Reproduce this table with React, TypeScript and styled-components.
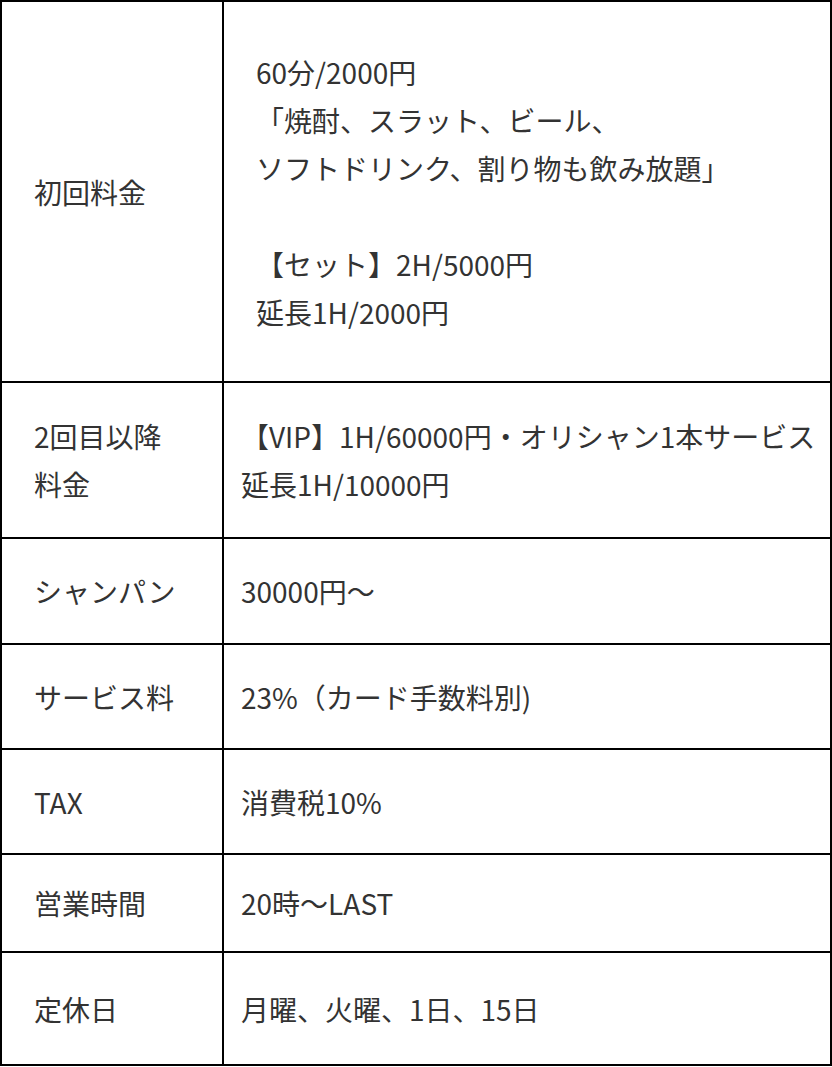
import styled, { createGlobalStyle } from 'styled-components';

const GlobalStyle = createGlobalStyle`
  html, body {
    margin: 0;
    padding: 0;
    background: #fff;
  }
`;

const Table = styled.div`
  width: 832px;
  box-sizing: border-box;
  border: 2px solid #000;
  font-family: 'Noto Sans CJK JP', 'Noto Sans', sans-serif;
  font-size: 28px;
  line-height: 48px;
  color: #333;
`;

const Row = styled.div<{ $height: number; $first?: boolean }>`
  display: grid;
  grid-template-columns: 222px 1fr;
  box-sizing: border-box;
  height: ${(p) => p.$height}px;
  border-top: ${(p) => (p.$first ? 'none' : '2px solid #000')};
`;

const HeadCell = styled.div`
  display: flex;
  align-items: center;
  box-sizing: border-box;
  padding-left: 32px;
  border-right: 2px solid #000;
`;

const Cell = styled.div<{ $indent?: number }>`
  display: flex;
  align-items: center;
  padding-left: ${(p) => p.$indent ?? 17}px;
  white-space: nowrap;
`;

const Lines = styled.div`
  display: flex;
  flex-direction: column;
`;

const Blank = styled.div`
  height: 48px;
`;

const rows = [
  { head: '2回目以降\n料金', body: ['【VIP】1H/60000円・オリシャン1本サービス', '延長1H/10000円'], height: 156 },
  { head: 'シャンパン', body: ['30000円〜'], height: 106 },
  { head: 'サービス料', body: ['23%（カード手数料別)'], height: 105 },
  { head: 'TAX', body: ['消費税10%'], height: 105 },
  { head: '営業時間', body: ['20時〜LAST'], height: 98 },
  { head: '定休日', body: ['月曜、火曜、1日、15日'], height: 113 },
];

export default function App() {
  return (
    <>
      <GlobalStyle />
      <Table>
        <Row $height={379} $first>
          <HeadCell>初回料金</HeadCell>
          <Cell $indent={32}>
            <Lines>
              <div>60分/2000円</div>
              <div>「焼酎、スラット、ビール、</div>
              <div>ソフトドリンク、割り物も飲み放題」</div>
              <Blank />
              <div>【セット】2H/5000円</div>
              <div>延長1H/2000円</div>
            </Lines>
          </Cell>
        </Row>
        {rows.map((r) => (
          <Row key={r.head} $height={r.height}>
            <HeadCell>
              <Lines>
                {r.head.split('\n').map((l) => (
                  <div key={l}>{l}</div>
                ))}
              </Lines>
            </HeadCell>
            <Cell>
              <Lines>
                {r.body.map((l) => (
                  <div key={l}>{l}</div>
                ))}
              </Lines>
            </Cell>
          </Row>
        ))}
      </Table>
    </>
  );
}
